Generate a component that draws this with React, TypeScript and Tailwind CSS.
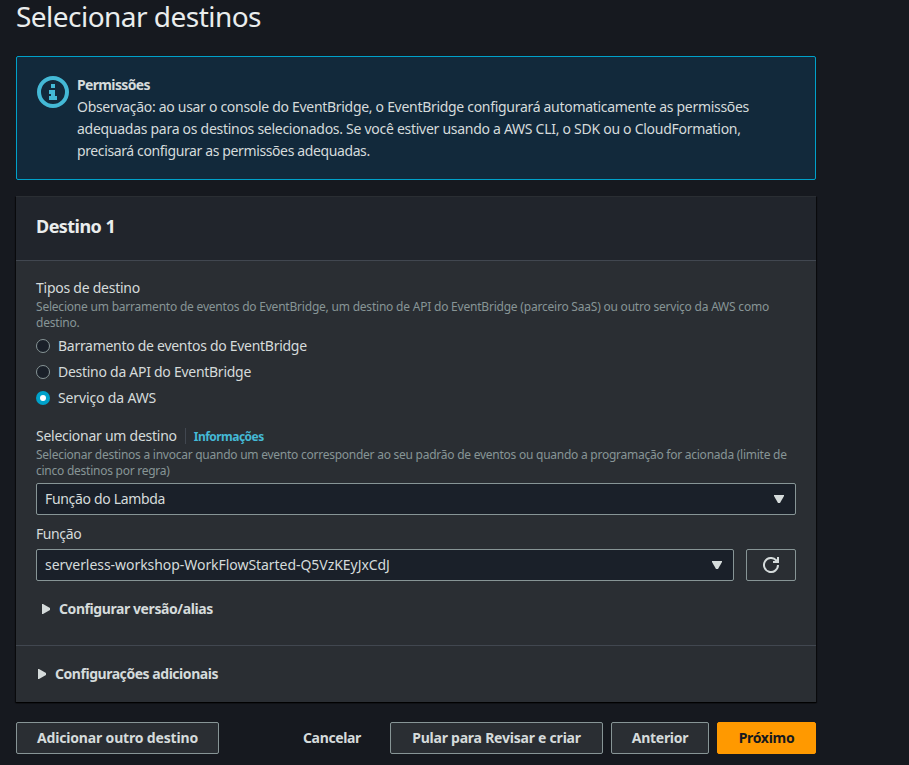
import type { ReactNode } from 'react';

function DownCaret() {
  return (
    <svg className="h-[8px] w-[10px] shrink-0" viewBox="0 0 10 8" fill="#d5dbdb">
      <path d="M0 0H10V1L6 8H4L0 1Z" />
    </svg>
  );
}

function RightCaret() {
  return (
    <svg className="h-[10px] w-[8px] shrink-0" viewBox="0 0 8 10" fill="#d5dbdb">
      <path d="M0 0H1L8 4V6L1 10H0Z" />
    </svg>
  );
}

function Radio({ checked = false, className, children }: { checked?: boolean; className: string; children: ReactNode }) {
  return (
    <label className="flex h-[22px] items-center gap-2">
      {checked ? (
        <span className="flex size-[14px] items-center justify-center rounded-full bg-[#00a1c9]">
          <span className="size-[6px] rounded-full bg-white" />
        </span>
      ) : (
        <span className="size-[14px] rounded-full border border-[#879596] bg-[#1a2029]" />
      )}
      <span className={className}>{children}</span>
    </label>
  );
}

function Select({ children }: { children: ReactNode }) {
  return (
    <div className="flex h-8 grow items-center justify-between rounded-[2px] border border-[#879596] bg-[#1a2029] pl-2 pr-[11px]">
      {children}
      <DownCaret />
    </div>
  );
}

function Button({ className, children }: { className: string; children: ReactNode }) {
  return (
    <button className={`flex h-8 items-center justify-center rounded-[2px] border font-bold whitespace-nowrap ${className}`}>
      {children}
    </button>
  );
}

export default function App() {
  return (
    <div className="h-[765px] w-[909px] bg-[#16191f] pl-4 font-['Noto_Sans',sans-serif] text-[14px] leading-[22px] text-[#d5dbdb]">
      <main className="w-[800px]">
        <h1 className="text-[28px] leading-8 tracking-[-0.53px] text-[#eaeded]">Selecionar destinos</h1>

        <section className="mt-6 flex h-[124px] rounded-[2px] border border-[#00a1c9] bg-[#12293b] pt-[17px] pl-5">
          <svg className="mt-[2px] mr-2 size-8 shrink-0" viewBox="0 0 32 32" fill="#44b9d6">
            <circle cx="16" cy="16" r="14" fill="none" stroke="#44b9d6" strokeWidth="4" />
            <path d="M14 8h4v4h-4zM12 14h6v6h2v4h-8v-4h2v-2h-2z" />
          </svg>
          <div className="whitespace-nowrap">
            <div className="font-bold tracking-[-0.65px]">Permissões</div>
            <div className="tracking-[-0.3px]">Observação: ao usar o console do EventBridge, o EventBridge configurará automaticamente as permissões</div>
            <div className="tracking-[-0.278px]">adequadas para os destinos selecionados. Se você estiver usando a AWS CLI, o SDK ou o CloudFormation,</div>
            <div className="tracking-[-0.38px]">precisará configurar as permissões adequadas.</div>
          </div>
        </section>

        <section className="mt-4 h-[506px] bg-[#2a2e33] shadow-[0_1px_1px_0_#000000cc,1px_1px_1px_0_#00000080,-1px_1px_1px_0_#00000080]">
          <header className="h-[65px] border-t border-b border-t-[#2a2e33] border-b-[#414750] bg-[#21252c] px-5 pt-[18px]">
            <h2 className="text-[18px] leading-[22px] font-bold tracking-[-0.55px] text-[#eaeded]">Destino 1</h2>
          </header>

          <div className="h-[384px] px-5 pt-4">
            <div className="tracking-[-0.25px]">Tipos de destino</div>
            <div className="text-[12px] leading-4 whitespace-nowrap text-[#879596]">
              <div className="tracking-[-0.212px]">
                Selecione um barramento de eventos do EventBridge, um destino de API do EventBridge (parceiro SaaS) ou outro serviço da AWS como
              </div>
              <div className="tracking-[-0.2px]">destino.</div>
            </div>
            <div className="mt-1 flex flex-col gap-1">
              <Radio className="tracking-[-0.285px]">Barramento de eventos do EventBridge</Radio>
              <Radio className="tracking-[-0.275px]">Destino da API do EventBridge</Radio>
              <Radio checked className="tracking-[-0.14px]">Serviço da AWS</Radio>
            </div>

            <div className="mt-4 flex h-[22px] items-center">
              <span className="tracking-[-0.26px]">Selecionar um destino</span>
              <span className="ml-2 h-4 w-px bg-[#414750]" />
              <a className="ml-2 pt-[2px] text-[12px] leading-5 font-bold tracking-[-0.53px] text-[#44b9d6]">Informações</a>
            </div>
            <div className="text-[12px] leading-4 whitespace-nowrap text-[#879596]">
              <div className="tracking-[-0.25px]">
                Selecionar destinos a invocar quando um evento corresponder ao seu padrão de eventos ou quando a programação for acionada (limite de
              </div>
              <div className="tracking-[-0.25px]">cinco destinos por regra)</div>
            </div>
            <div className="mt-1 flex">
              <Select>
                <span className="tracking-[-0.33px]">Função do Lambda</span>
              </Select>
            </div>

            <div className="mt-2 tracking-[-0.4px]">Função</div>
            <div className="mt-1 flex gap-3">
              <Select>
                <span className="tracking-[-0.05px]">serverless-workshop-WorkFlowStarted-Q5VzKEyJxCdJ</span>
              </Select>
              <button className="flex h-8 w-[50px] items-center justify-center rounded-[2px] border border-[#879596]">
                <svg className="size-4" viewBox="0 0 16 16" fill="none" stroke="#d5dbdb" strokeWidth="2">
                  <path d="M15 8A7 7 0 1 1 13.2 3.3" />
                  <path d="M14 0h2v6h-6V4h2.5l-.7-.8L13 2l1 1Z" fill="#d5dbdb" stroke="none" />
                </svg>
              </button>
            </div>

            <div className="mt-[17px] flex items-center gap-[9px] pl-[6px] font-bold">
              <RightCaret />
              <span className="tracking-[-0.42px]">Configurar versão/alias</span>
            </div>
          </div>

          <div className="flex h-[57px] items-center gap-[9px] border-t border-[#414750] pl-[22px] font-bold">
            <RightCaret />
            <span className="tracking-[-0.46px]">Configurações adicionais</span>
          </div>
        </section>

        <footer className="mt-5 flex">
          <Button className="w-[203px] border-[#879596] bg-[#2a2e33] tracking-[-0.17px]">Adicionar outro destino</Button>
          <Button className="ml-[63px] w-[100px] border-transparent tracking-[-0.35px]">Cancelar</Button>
          <Button className="ml-2 w-[213px] border-[#879596] bg-[#2a2e33] tracking-[-0.23px]">Pular para Revisar e criar</Button>
          <Button className="ml-2 w-[98px] border-[#879596] bg-[#2a2e33] tracking-[-0.3px]">Anterior</Button>
          <Button className="ml-2 w-[99px] border-[#ff9900] bg-[#ff9900] tracking-[-0.3px] text-[#16191f]">Próximo</Button>
        </footer>
      </main>
    </div>
  );
}
